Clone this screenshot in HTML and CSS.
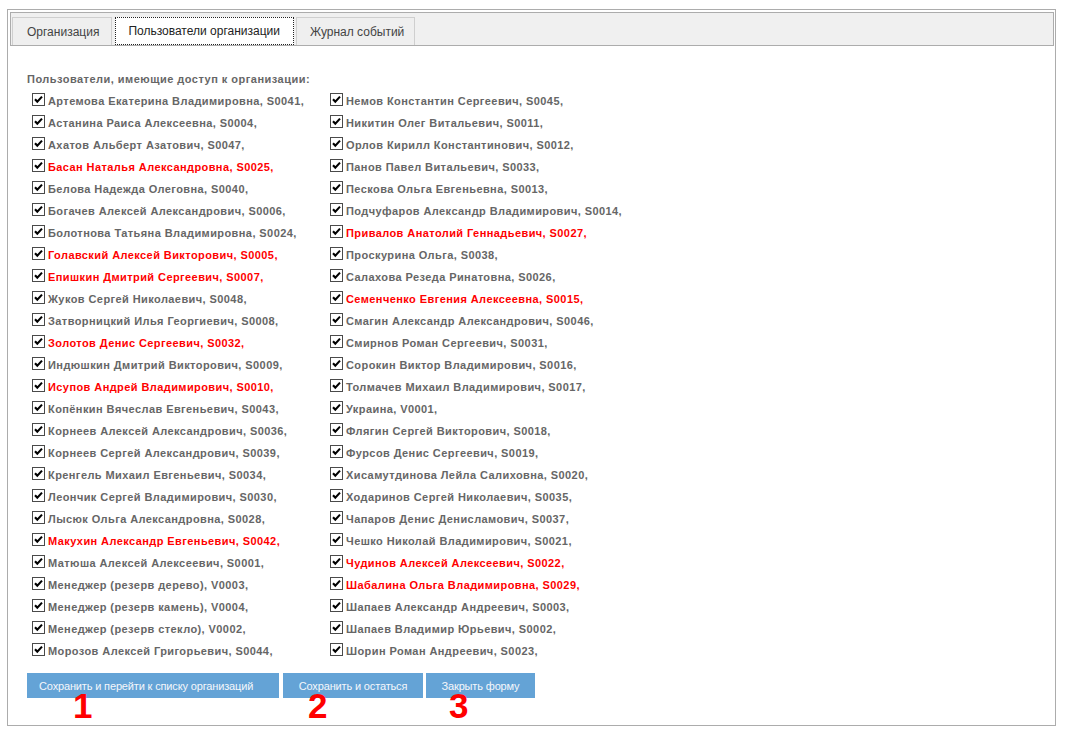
FILE: index.html
```html
<!DOCTYPE html>
<html lang="ru">
<head>
<meta charset="utf-8">
<title>Пользователи организации</title>
<link rel="stylesheet" href="styles.css">
</head>
<body>
<div class="frame">
  <div class="tabbar">
    <div class="tab tab-1">Организация</div>
    <div class="tab tab-2 active">Пользователи организации</div>
    <div class="tab tab-3">Журнал событий</div>
  </div>
  <div class="content">
    <div class="caption">Пользователи, имеющие доступ к организации:</div>
    <div class="cols">
      <div class="col col-left">
        <div class="row"><span class="cb"></span><span class="name">Артемова Екатерина Владимировна, S0041,</span></div>
        <div class="row"><span class="cb"></span><span class="name">Астанина Раиса Алексеевна, S0004,</span></div>
        <div class="row"><span class="cb"></span><span class="name">Ахатов Альберт Азатович, S0047,</span></div>
        <div class="row"><span class="cb"></span><span class="name red">Басан Наталья Александровна, S0025,</span></div>
        <div class="row"><span class="cb"></span><span class="name">Белова Надежда Олеговна, S0040,</span></div>
        <div class="row"><span class="cb"></span><span class="name">Богачев Алексей Александрович, S0006,</span></div>
        <div class="row"><span class="cb"></span><span class="name">Болотнова Татьяна Владимировна, S0024,</span></div>
        <div class="row"><span class="cb"></span><span class="name red">Голавский Алексей Викторович, S0005,</span></div>
        <div class="row"><span class="cb"></span><span class="name red">Епишкин Дмитрий Сергеевич, S0007,</span></div>
        <div class="row"><span class="cb"></span><span class="name">Жуков Сергей Николаевич, S0048,</span></div>
        <div class="row"><span class="cb"></span><span class="name">Затворницкий Илья Георгиевич, S0008,</span></div>
        <div class="row"><span class="cb"></span><span class="name red">Золотов Денис Сергеевич, S0032,</span></div>
        <div class="row"><span class="cb"></span><span class="name">Индюшкин Дмитрий Викторович, S0009,</span></div>
        <div class="row"><span class="cb"></span><span class="name red">Исупов Андрей Владимирович, S0010,</span></div>
        <div class="row"><span class="cb"></span><span class="name">Копёнкин Вячеслав Евгеньевич, S0043,</span></div>
        <div class="row"><span class="cb"></span><span class="name">Корнеев Алексей Александрович, S0036,</span></div>
        <div class="row"><span class="cb"></span><span class="name">Корнеев Сергей Александрович, S0039,</span></div>
        <div class="row"><span class="cb"></span><span class="name">Кренгель Михаил Евгеньевич, S0034,</span></div>
        <div class="row"><span class="cb"></span><span class="name">Леончик Сергей Владимирович, S0030,</span></div>
        <div class="row"><span class="cb"></span><span class="name">Лысюк Ольга Александровна, S0028,</span></div>
        <div class="row"><span class="cb"></span><span class="name red">Макухин Александр Евгеньевич, S0042,</span></div>
        <div class="row"><span class="cb"></span><span class="name">Матюша Алексей Алексеевич, S0001,</span></div>
        <div class="row"><span class="cb"></span><span class="name">Менеджер (резерв дерево), V0003,</span></div>
        <div class="row"><span class="cb"></span><span class="name">Менеджер (резерв камень), V0004,</span></div>
        <div class="row"><span class="cb"></span><span class="name">Менеджер (резерв стекло), V0002,</span></div>
        <div class="row"><span class="cb"></span><span class="name">Морозов Алексей Григорьевич, S0044,</span></div>
      </div>
      <div class="col col-right">
        <div class="row"><span class="cb"></span><span class="name">Немов Константин Сергеевич, S0045,</span></div>
        <div class="row"><span class="cb"></span><span class="name">Никитин Олег Витальевич, S0011,</span></div>
        <div class="row"><span class="cb"></span><span class="name">Орлов Кирилл Константинович, S0012,</span></div>
        <div class="row"><span class="cb"></span><span class="name">Панов Павел Витальевич, S0033,</span></div>
        <div class="row"><span class="cb"></span><span class="name">Пескова Ольга Евгеньевна, S0013,</span></div>
        <div class="row"><span class="cb"></span><span class="name">Подчуфаров Александр Владимирович, S0014,</span></div>
        <div class="row"><span class="cb"></span><span class="name red">Привалов Анатолий Геннадьевич, S0027,</span></div>
        <div class="row"><span class="cb"></span><span class="name">Проскурина Ольга, S0038,</span></div>
        <div class="row"><span class="cb"></span><span class="name">Салахова Резеда Ринатовна, S0026,</span></div>
        <div class="row"><span class="cb"></span><span class="name red">Семенченко Евгения Алексеевна, S0015,</span></div>
        <div class="row"><span class="cb"></span><span class="name">Смагин Александр Александрович, S0046,</span></div>
        <div class="row"><span class="cb"></span><span class="name">Смирнов Роман Сергеевич, S0031,</span></div>
        <div class="row"><span class="cb"></span><span class="name">Сорокин Виктор Владимирович, S0016,</span></div>
        <div class="row"><span class="cb"></span><span class="name">Толмачев Михаил Владимирович, S0017,</span></div>
        <div class="row"><span class="cb"></span><span class="name">Украина, V0001,</span></div>
        <div class="row"><span class="cb"></span><span class="name">Флягин Сергей Викторович, S0018,</span></div>
        <div class="row"><span class="cb"></span><span class="name">Фурсов Денис Сергеевич, S0019,</span></div>
        <div class="row"><span class="cb"></span><span class="name">Хисамутдинова Лейла Салиховна, S0020,</span></div>
        <div class="row"><span class="cb"></span><span class="name">Ходаринов Сергей Николаевич, S0035,</span></div>
        <div class="row"><span class="cb"></span><span class="name">Чапаров Денис Денисламович, S0037,</span></div>
        <div class="row"><span class="cb"></span><span class="name">Чешко Николай Владимирович, S0021,</span></div>
        <div class="row"><span class="cb"></span><span class="name red">Чудинов Алексей Алексеевич, S0022,</span></div>
        <div class="row"><span class="cb"></span><span class="name red">Шабалина Ольга Владимировна, S0029,</span></div>
        <div class="row"><span class="cb"></span><span class="name">Шапаев Александр Андреевич, S0003,</span></div>
        <div class="row"><span class="cb"></span><span class="name">Шапаев Владимир Юрьевич, S0002,</span></div>
        <div class="row"><span class="cb"></span><span class="name">Шорин Роман Андреевич, S0023,</span></div>
      </div>
    </div>
    <div class="buttons">
      <div class="btn btn-1">Сохранить и перейти к списку организаций<span class="mark mark-1">1</span></div>
      <div class="btn btn-2">Сохранить и остаться<span class="mark mark-2">2</span></div>
      <div class="btn btn-3">Закрыть форму<span class="mark mark-3">3</span></div>
    </div>
  </div>
</div>
</body>
</html>
```

FILE: styles.css
```css
html, body {
  margin: 0;
  padding: 0;
  background: #ffffff;
}

body {
  padding: 9px 10px 0 7px;
  font-family: "Liberation Sans", Arial, sans-serif;
}

.frame {
  border: 1px solid #acacac;
  padding: 2px 1px 26px 2px;
  box-sizing: border-box;
  height: 717px;
}

.tabbar {
  display: flex;
  gap: 3px;
  height: 34px;
  box-sizing: border-box;
  border: 1px solid #acacac;
  background: #f0f0f0;
  padding: 4px 0 0 1px;
}

.tab {
  height: 28px;
  box-sizing: border-box;
  border: 1px solid #cfcfcf;
  border-bottom: none;
  background: #efefef;
  display: flex;
  align-items: center;
  font-size: 12px;
  color: #444;
}

.tab-1 { padding: 0 12px 0 14px; }
.tab-2 { padding: 0 13px 0 12px; margin-right: -1px; }
.tab-3 { padding: 0 10px 0 13px; }

.tab.active {
  background: #ffffff;
  border: 1px dotted #222;
  color: #222;
}

.content {
  padding: 25px 0 0 17px;
}

.caption {
  font-size: 11px;
  font-weight: bold;
  letter-spacing: 0.48px;
  line-height: 16px;
  height: 19px;
  color: #666;
}

.cols {
  display: flex;
  padding-left: 5px;
}

.col-left {
  width: 298px;
}

.row {
  height: 22px;
  display: flex;
  align-items: center;
  gap: 3px;
}

.cb {
  width: 13px;
  height: 13px;
  box-sizing: border-box;
  border: 1px solid #4a4a4a;
  background: #fff url("data:image/svg+xml;utf8,<svg xmlns='http://www.w3.org/2000/svg' width='11' height='11' viewBox='0 0 11 11'><path d='M2 5.2 L4.3 7.6 L9 2.6' fill='none' stroke='black' stroke-width='2.1'/></svg>") no-repeat center;
  flex: none;
  margin-top: -4px;
}

.name {
  font-size: 11px;
  font-weight: bold;
  letter-spacing: 0.42px;
  color: #666;
  white-space: nowrap;
}

.name.red {
  color: #ff0000;
}

.buttons {
  display: flex;
  gap: 4px;
  margin-top: 11px;
}

.btn {
  position: relative;
  height: 25px;
  box-sizing: border-box;
  background: #64a3d6;
  color: #f4f7fb;
  font-size: 11px;
  letter-spacing: -0.15px;
  display: flex;
  align-items: center;
  justify-content: center;
}

.btn-1 { width: 252px; justify-content: flex-start; padding-left: 12px; }
.btn-2 { width: 140px; }
.btn-3 { width: 109px; margin-left: -1px; }

.mark {
  position: absolute;
  top: 20px;
  font-family: "Liberation Sans", Arial, sans-serif;
  font-weight: bold;
  font-size: 35px;
  line-height: 26px;
  letter-spacing: 0;
  color: #ff0000;
}

.mark-1 { left: 46px; }
.mark-2 { left: 25px; }
.mark-3 { left: 23px; }
```
